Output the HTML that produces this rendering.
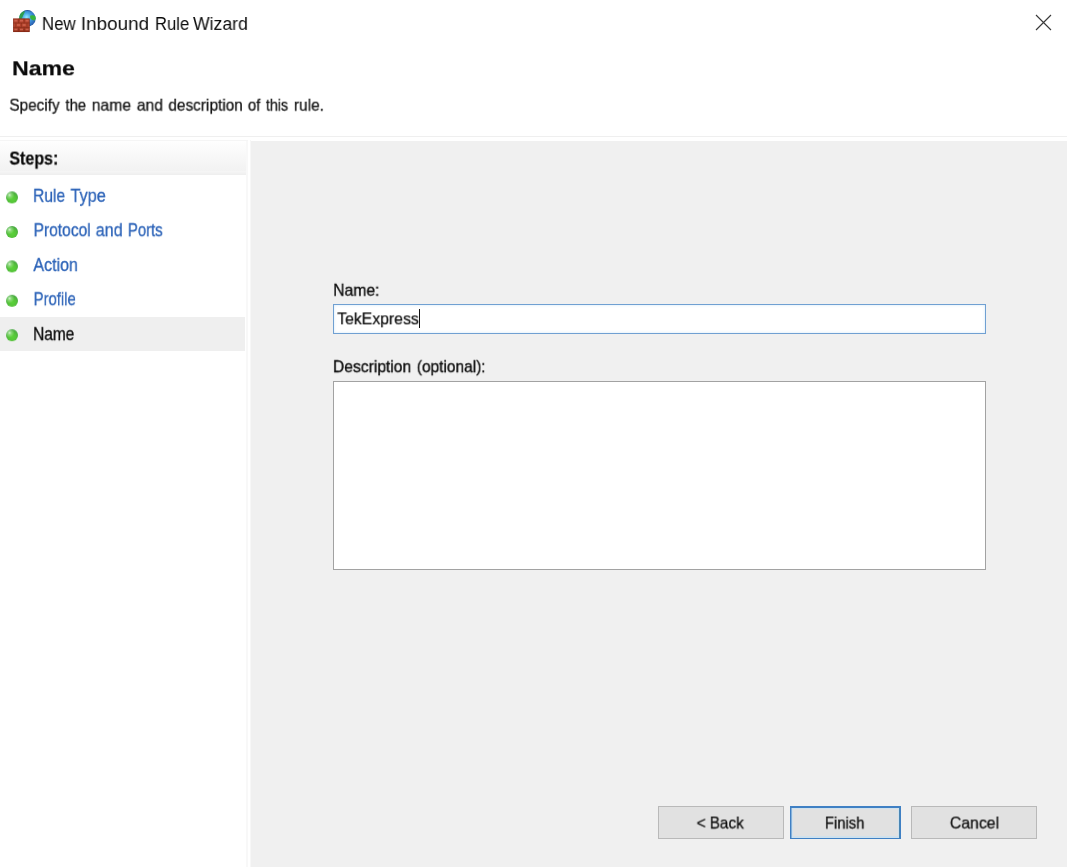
<!DOCTYPE html>
<html lang="en">
<head>
<meta charset="utf-8">
<title>New Inbound Rule Wizard</title>
<style>
html,body{margin:0;padding:0;}
body{width:1067px;height:867px;position:relative;overflow:hidden;background:#fff;
  font-family:"Liberation Sans",sans-serif;color:#000;}
.abs{position:absolute;}
.ln{position:absolute;left:0;top:0;width:0;height:0;margin:0;padding:0;line-height:1;white-space:nowrap;display:block;}
header,nav,main,form,ul,li{display:block;margin:0;padding:0;list-style:none;}
.ln span{position:absolute;left:0;top:0;display:block;line-height:1;white-space:nowrap;transform-origin:0 0;will-change:transform;-webkit-text-stroke-width:inherit;-webkit-text-stroke-color:currentColor;}
#sep{left:0;top:136px;width:1067px;height:1px;background:#efefef;}
#hdrtop{left:0;top:140px;width:248px;height:1px;background:#f5f5f5;}
#stephdr{left:0;top:141px;width:247px;height:30px;background:linear-gradient(#fefefe,#f2f2f2);}
#stephdr2{left:0;top:171px;width:247px;height:4px;background:linear-gradient(#f6f6f6,#eeeeee);}
#lstrip{left:246px;top:141px;width:2px;height:726px;background:#f8f8f8;}
#sel{left:0;top:316.7px;width:245px;height:34.2px;background:#efefef;}
#rstrip{left:250px;top:140px;width:1px;height:727px;background:#f7f7f7;}
#right{left:251px;top:141px;width:816px;height:726px;background:#f0f0f0;}
.dot{position:absolute;top:0;left:6.3px;width:11.8px;height:11.8px;border-radius:50%;background:radial-gradient(circle at 30% 30%,rgba(240,255,235,.8) 0%,rgba(200,245,190,.45) 16%,rgba(255,255,255,0) 40%),radial-gradient(circle at 52% 64%,#5ad238 0%,#56c43a 38%,#4aa845 74%,#3f9446 100%);filter:blur(0.4px);will-change:transform;}
#name{left:333px;top:304px;width:651px;height:28px;background:#fff;border:1px solid #70a0d2;box-shadow:inset 0 0 3px rgba(130,190,235,.35);}
#desc{left:333px;top:381px;width:651px;height:187px;background:#fff;border:1px solid #a2a2a2;}
.btn{position:absolute;top:806px;height:31px;background:#e1e1e1;border:1px solid #b9b9b9;box-sizing:content-box;display:block;margin:0;padding:0;font:inherit;color:inherit;text-align:left;border-radius:0;outline:none;overflow:visible;-webkit-appearance:none;appearance:none;cursor:default;}
#bfinish{border:1px solid #3f80c4;box-shadow:inset 0 1px 0 0 #3f80c4, inset -1px 0 0 0 #4a86b4, inset 1px 0 0 0 rgba(63,128,196,0.5), inset 0 0 0 2px rgba(190,225,250,0.5);}
#caret{left:419px;top:308.6px;width:1.2px;height:19.2px;background:#111;}
</style>
</head>
<body>
<header>
<svg class="abs" role="img" aria-label="Windows Firewall" style="left:0;top:0" width="48" height="40" viewBox="0 0 48 40">
  <defs>
    <radialGradient id="g1" cx="45%" cy="42%" r="62%">
      <stop offset="0" stop-color="#8feaff"/><stop offset="0.4" stop-color="#45a6e4"/><stop offset="0.8" stop-color="#2f6fc0"/><stop offset="1" stop-color="#27549c"/>
    </radialGradient>
    <linearGradient id="g2" x1="0" y1="0" x2="0" y2="1">
      <stop offset="0" stop-color="#ad3d28"/><stop offset="0.5" stop-color="#b5452f"/><stop offset="1" stop-color="#94301d"/>
    </linearGradient>
    <filter id="bl" x="-20%" y="-20%" width="140%" height="140%"><feGaussianBlur stdDeviation="0.55"/></filter>
  </defs>
  <g filter="url(#bl)">
    <circle cx="27.4" cy="18.5" r="8.3" fill="url(#g1)"/>
    <path d="M19.1 18.9 A8.3 8.3 0 0 1 24.6 10.7 Q25.4 11.8 24 13.8 Q22.6 17 21.6 18.8 Q20.2 19.6 19.1 18.9z" fill="#2e9e50"/>
    <path d="M30.4 15.6 q3 -1.2 5.2 0.8 q0.6 2.4 -1 4.2 q-2.8 0 -4.2 -2 q-0.6 -1.8 0 -3z" fill="#39b53c"/>
    <path d="M22.4 11.9 A8.3 8.3 0 0 1 32.6 12.1 Q27.4 10.1 22.4 11.9z" fill="#2a5a9e"/>
    <rect x="13.2" y="18.6" width="16.4" height="13.4" fill="url(#g2)"/>
    <rect x="13.5" y="18.9" width="15.8" height="12.8" fill="none" stroke="#7c2412" stroke-width="0.7" opacity="0.7"/>
    <path d="M13.2 23h16.4M13.2 27.5h16.4M18.6 18.6v4.4M24.2 18.6v4.4M15.8 23v4.5M21.4 23v4.5M27 23v4.5M18.6 27.5v4.5M24.2 27.5v4.5" stroke="#7a2414" stroke-width="0.8" fill="none" opacity="0.55"/>
    <path d="M14.4 20.6h3M20 20.6h3M25.6 20.6h3M17 25h3M22.6 25h3M14.4 29.5h3M20 29.5h3M25.6 29.5h3" stroke="#d9705a" stroke-width="1.6" fill="none" opacity="0.7"/>
  </g>
</svg>
<div class="ln" id="ttl" style="font-size:18.3px;font-weight:400;color:#0c0c0c;-webkit-text-stroke-width:0px;"><span style="transform:translate(41.90px,14.95px) scale(0.9263,0.999)">New</span> <span style="transform:translate(80.80px,14.95px) scale(1.0331,0.999)">Inbound</span> <span style="transform:translate(154.95px,14.95px) scale(0.9110,0.999)">Rule</span> <span style="transform:translate(192.98px,14.95px) scale(0.9655,0.999)">Wizard</span></div>
<svg class="abs" role="img" aria-label="Close" style="left:1034px;top:13px" width="19" height="19" viewBox="0 0 19 19"><path d="M2 2L17 17M17 2L2 17" stroke="#3a3a3a" stroke-width="1.15" fill="none"/></svg>
<h1 class="ln" id="h1" style="font-size:20.5px;font-weight:700;color:#0a0a0a;-webkit-text-stroke-width:0.2px;"><span style="transform:translate(12.01px,58.29px) scale(1.1257,0.999)">Name</span></h1>
<p class="ln" id="sub" style="font-size:15.9px;font-weight:400;color:#101010;-webkit-text-stroke-width:0.25px;"><span style="transform:translate(9.38px,97.68px) scale(0.9626,0.999)">Specify</span> <span style="transform:translate(65.43px,97.68px) scale(0.9335,0.999)">the</span> <span style="transform:translate(91.72px,97.68px) scale(0.9878,0.999)">name</span> <span style="transform:translate(136.82px,97.68px) scale(0.9836,0.999)">and</span> <span style="transform:translate(168.37px,97.68px) scale(0.9680,0.999)">description</span> <span style="transform:translate(247.82px,97.68px) scale(0.9494,0.999)">of</span> <span style="transform:translate(265.85px,97.68px) scale(0.9002,0.999)">this</span> <span style="transform:translate(293.84px,97.68px) scale(0.9740,0.999)">rule.</span></p>
</header>
<div class="abs" id="sep"></div>
<nav aria-label="Steps">
<div class="abs" id="hdrtop"></div>
<div class="abs" id="stephdr"></div>
<div class="abs" id="stephdr2"></div>
<div class="abs" id="lstrip"></div>
<div class="abs" id="sel"></div>
<h2 class="ln" id="steps" style="font-size:17.8px;font-weight:700;color:#0a0a0a;-webkit-text-stroke-width:0.25px;"><span style="transform:translate(9.38px,150.56px) scale(0.8995,0.999)">Steps:</span></h2>
<ul>
<li><div class="dot" style="transform:translateY(191.4px)"></div><div class="ln" id="s1" style="font-size:19px;font-weight:400;color:#2c63b8;-webkit-text-stroke-width:0.3px;"><span style="transform:translate(33.01px,185.84px) scale(0.8207,0.999)">Rule</span> <span style="transform:translate(70.45px,185.84px) scale(0.8601,0.999)">Type</span></div></li>
<li><div class="dot" style="transform:translateY(226.0px)"></div><div class="ln" id="s2" style="font-size:19px;font-weight:400;color:#2c63b8;-webkit-text-stroke-width:0.3px;"><span style="transform:translate(33.60px,220.23px) scale(0.8187,0.999)">Protocol</span> <span style="transform:translate(95.74px,220.23px) scale(0.8491,0.999)">and</span> <span style="transform:translate(127.86px,220.23px) scale(0.7858,0.999)">Ports</span></div></li>
<li><div class="dot" style="transform:translateY(260.4px)"></div><div class="ln" id="s3" style="font-size:19px;font-weight:400;color:#2c63b8;-webkit-text-stroke-width:0.3px;"><span style="transform:translate(33.34px,255.03px) scale(0.8431,0.999)">Action</span></div></li>
<li><div class="dot" style="transform:translateY(294.8px)"></div><div class="ln" id="s4" style="font-size:19px;font-weight:400;color:#2c63b8;-webkit-text-stroke-width:0.3px;"><span style="transform:translate(33.62px,289.25px) scale(0.7836,0.999)">Profile</span></div></li>
<li aria-current="step"><div class="dot" style="transform:translateY(329.2px)"></div><div class="ln" id="s5" style="font-size:19px;font-weight:400;color:#0c0c0c;-webkit-text-stroke-width:0.3px;"><span style="transform:translate(33.05px,324.15px) scale(0.8149,0.999)">Name</span></div></li>
</ul>
</nav>
<main>
<div class="abs" id="rstrip"></div>
<div class="abs" id="right"></div>
<label class="ln" id="lname" style="font-size:17.0px;font-weight:400;color:#0c0c0c;-webkit-text-stroke-width:0.35px;"><span style="transform:translate(333.26px,281.76px) scale(0.9215,0.999)">Name:</span></label>
<div class="abs" id="name" role="textbox" aria-label="Name"></div>
<div class="ln" id="vname" style="font-size:15.7px;font-weight:400;color:#0c0c0c;-webkit-text-stroke-width:0.2px;"><span style="transform:translate(337.19px,311.38px) scale(1.0075,0.999)">TekExpress</span></div>
<div class="abs" id="caret"></div>
<label class="ln" id="ldesc" style="font-size:17.0px;font-weight:400;color:#0c0c0c;-webkit-text-stroke-width:0.35px;"><span style="transform:translate(332.96px,358.25px) scale(0.9204,0.999)">Description</span> <span style="transform:translate(416.81px,358.25px) scale(0.9098,0.999)">(optional):</span></label>
<div class="abs" id="desc" role="textbox" aria-multiline="true" aria-label="Description (optional)"></div>
<button type="button" class="btn" id="bback" style="left:658px;width:124px;"><span class="ln" id="tback" style="font-size:15.9px;font-weight:400;color:#0c0c0c;-webkit-text-stroke-width:0.25px;"><span style="transform:translate(37.71px,8.51px) scale(0.9690,0.999)">&lt;</span> <span style="transform:translate(50.79px,8.51px) scale(0.9581,0.999)">Back</span></span></button>
<button type="button" class="btn" id="bfinish" style="left:790px;width:109px;"><span class="ln" id="tfinish" style="font-size:15.9px;font-weight:400;color:#0c0c0c;-webkit-text-stroke-width:0.25px;"><span style="transform:translate(33.92px,8.55px) scale(0.9337,0.999)">Finish</span></span></button>
<button type="button" class="btn" id="bcancel" style="left:911px;width:124px;"><span class="ln" id="tcancel" style="font-size:15.9px;font-weight:400;color:#0c0c0c;-webkit-text-stroke-width:0.25px;"><span style="transform:translate(37.82px,8.51px) scale(0.9944,0.999)">Cancel</span></span></button>
</main>
</body>
</html>
